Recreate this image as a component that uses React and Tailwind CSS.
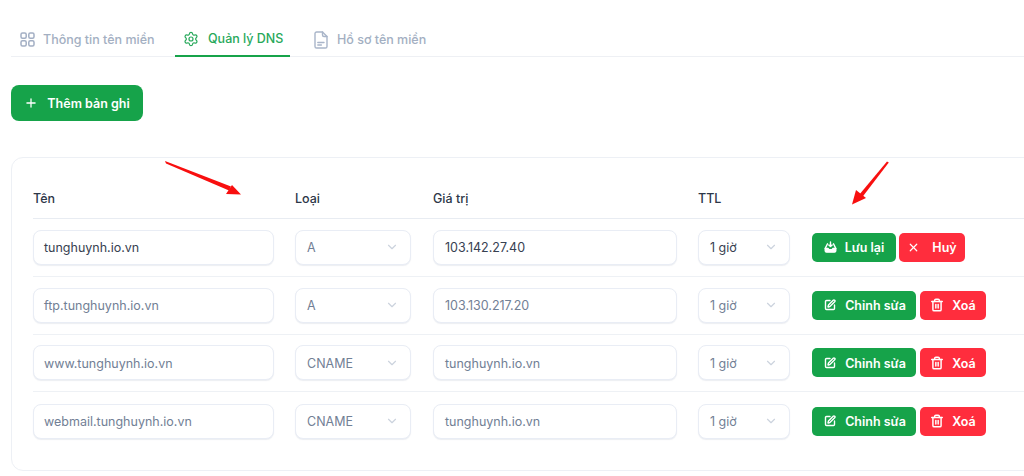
import React from 'react';
import { Settings, Plus, X, SquarePen, Trash2, ChevronDown } from 'lucide-react';

const records = [
  { name: 'tunghuynh.io.vn', type: 'A', value: '103.142.27.40', editing: true },
  { name: 'ftp.tunghuynh.io.vn', type: 'A', value: '103.130.217.20' },
  { name: 'www.tunghuynh.io.vn', type: 'CNAME', value: 'tunghuynh.io.vn' },
  { name: 'webmail.tunghuynh.io.vn', type: 'CNAME', value: 'tunghuynh.io.vn' },
];

const GridIcon = () => (
  <svg width="15" height="15" viewBox="0 0 15 15" fill="none" stroke="#a3afc4" strokeWidth="1.5">
    <rect x="1" y="1" width="5.2" height="5.2" rx="1.5" />
    <rect x="8.8" y="1" width="5.2" height="5.2" rx="1.5" />
    <rect x="1" y="8.8" width="5.2" height="5.2" rx="1.5" />
    <rect x="8.8" y="8.8" width="5.2" height="5.2" rx="1.5" />
  </svg>
);

const DocIcon = () => (
  <svg width="14" height="18" viewBox="0 0 14 18" fill="none" stroke="#a9b5c9" strokeWidth="1.4" strokeLinecap="round" strokeLinejoin="round">
    <path d="M8.5 1H2.6A1.6 1.6 0 0 0 1 2.6v12.8A1.6 1.6 0 0 0 2.6 17h8.8a1.6 1.6 0 0 0 1.6-1.6V5.5Z" />
    <path d="M8.5 1v3a1.5 1.5 0 0 0 1.5 1.5h3" />
    <path d="M3.8 11.5h6.2M3.8 14h3.6" />
  </svg>
);

// khay + mũi tên xuống
const SaveIcon = () => (
  <svg width="13" height="13" viewBox="0 0 14 14" fill="none" stroke="white" strokeWidth="1.5" strokeLinecap="round" strokeLinejoin="round">
    <path d="M3.8 3 1.3 8M10.2 3 12.7 8" />
    <path d="M1.3 8h3l1 1.4h3.4l1-1.4h3v2.6a1.4 1.4 0 0 1-1.4 1.4H2.7a1.4 1.4 0 0 1-1.4-1.4Z" fill="white" />
    <path d="M7 1V6M5.2 4.2 7 6 8.8 4.2" />
  </svg>
);

const Field = ({ children, active, className }) => (
  <div
    className={`h-[35px] flex items-center bg-white border border-[#e9edf5] rounded-lg shadow-[0_1px_1px_rgba(148,163,184,0.18)] text-[12.5px] ${
      active ? 'text-[#374151]' : 'text-[#728095]'
    } ${className}`}
  >
    {children}
  </div>
);

const Select = ({ label, active, className = '' }) => (
  <Field active={active} className={`pl-[11px] pr-[11px] justify-between ${className}`}>
    <span className="pt-[2px]">{label}</span>
    <ChevronDown size={14} className="text-[#ccd3de]" />
  </Field>
);

const ActionButton = ({ color, icon, label, width, gap = 'gap-[10px]' }) => (
  <button className={`h-[29px] ${width} ${gap} ${color} flex items-center justify-center rounded-[5px] text-white text-[12.5px] font-semibold`}>
    {icon}
    <span className="pt-[2px]">{label}</span>
  </button>
);

const App = () => {
  return (
    <div className="relative w-[1024px] h-[476px] overflow-hidden bg-white" style={{ fontFamily: 'Inter, "Noto Sans", sans-serif' }}>
      {/* Tabs */}
      <div className="ml-[11px] pt-[18px] h-[57px] flex border-b border-[#eef0f4] text-[12.5px] font-medium">
        <div className="h-[39px] pt-[4px] pl-[9px] w-[164px] flex items-center gap-[8px] text-[#a3afc2]">
          <GridIcon />
          <span className="pt-px">Thông tin tên miền</span>
        </div>
        <div className="h-[39px] pt-[4px] w-[115px] pl-[8px] flex items-center gap-[9px] text-[#27a85a] border-b-2 border-[#16a34a]">
          <Settings size={16} strokeWidth={1.8} />
          <span className="pt-px">Quản lý DNS</span>
        </div>
        <div className="h-[39px] pt-[4px] pl-[24px] flex items-center gap-[9px] text-[#a3afc2]">
          <DocIcon />
          <span className="pt-px">Hồ sơ tên miền</span>
        </div>
      </div>

      <button className="mt-[28px] ml-[11px] w-[132px] h-[36px] flex items-center justify-center gap-[9px] bg-[#16a34a] rounded-lg text-white text-[12.5px] font-semibold">
        <Plus size={14} strokeWidth={2.2} />
        <span className="pt-[2px]">Thêm bản ghi</span>
      </button>

      {/* Bảng bản ghi */}
      <div className="mt-[36px] ml-[11px] w-[1040px] h-[314px] pl-[21px] border border-[#edf0f5] rounded-xl">
        <div className="h-[61px] pb-[9px] grid grid-cols-[241px_117px_244px_92px_1fr] gap-x-[21px] items-end border-b border-[#e8ecf2] text-[12.5px] font-medium text-[#2d3748]">
          <span>Tên</span>
          <span>Loại</span>
          <span>Giá trị</span>
          <span>TTL</span>
        </div>
        {records.map((r, i) => (
          <div
            key={r.name}
            className={`h-[57.75px] grid grid-cols-[241px_117px_244px_92px_1fr] gap-x-[21px] items-center ${
              i < 3 ? 'border-b border-[#eef1f5]' : ''
            }`}
          >
            <Field active={r.editing} className="pl-[10px] pr-[11px]">
              <span className="pt-[2px]">{r.name}</span>
            </Field>
            <Select label={r.type} className="w-[116px]" />
            <Field active={r.editing} className="px-[11px]">
              <span className="pt-[2px]">{r.value}</span>
            </Field>
            <Select label="1 giờ" active={r.editing} />
            <div className="flex ml-[1px]">
              {r.editing ? (
                <div className="flex gap-[3px]">
                  <ActionButton color="bg-[#16a34a]" width="w-[84px]" gap="gap-[8px]" icon={<SaveIcon />} label="Lưu lại" />
                  <ActionButton color="bg-[#ff2d3d]" width="w-[66px]" gap="gap-[12px]" icon={<X size={13} strokeWidth={2.2} />} label="Huỷ" />
                </div>
              ) : (
                <div className="flex gap-[4px]">
                  <ActionButton color="bg-[#16a34a] pl-[2px]" width="w-[104px]" gap="gap-[9px]" icon={<SquarePen size={12} strokeWidth={2.8} />} label="Chỉnh sửa" />
                  <ActionButton color="bg-[#ff2d3d]" width="w-[66px]" gap="gap-[8px]" icon={<Trash2 size={14} strokeWidth={2.5} />} label="Xoá" />
                </div>
              )}
            </div>
          </div>
        ))}
      </div>

      {/* Mũi tên chú thích */}
      <svg className="absolute left-0 top-0 pointer-events-none" width="1024" height="476" fill="#f80f0f" stroke="none">
        <path d="M165 161 L166 163.4 L229 190.6 L231 186.6 Z" />
        <path d="M241 194.5 L226 194 L232 185 Z" />
        <path d="M888.8 162.6 L887 161.6 L859 195 L862 197.5 Z" />
        <path d="M852 204.5 L856 190 L866 198 Z" />
      </svg>
    </div>
  );
};

export default App;
